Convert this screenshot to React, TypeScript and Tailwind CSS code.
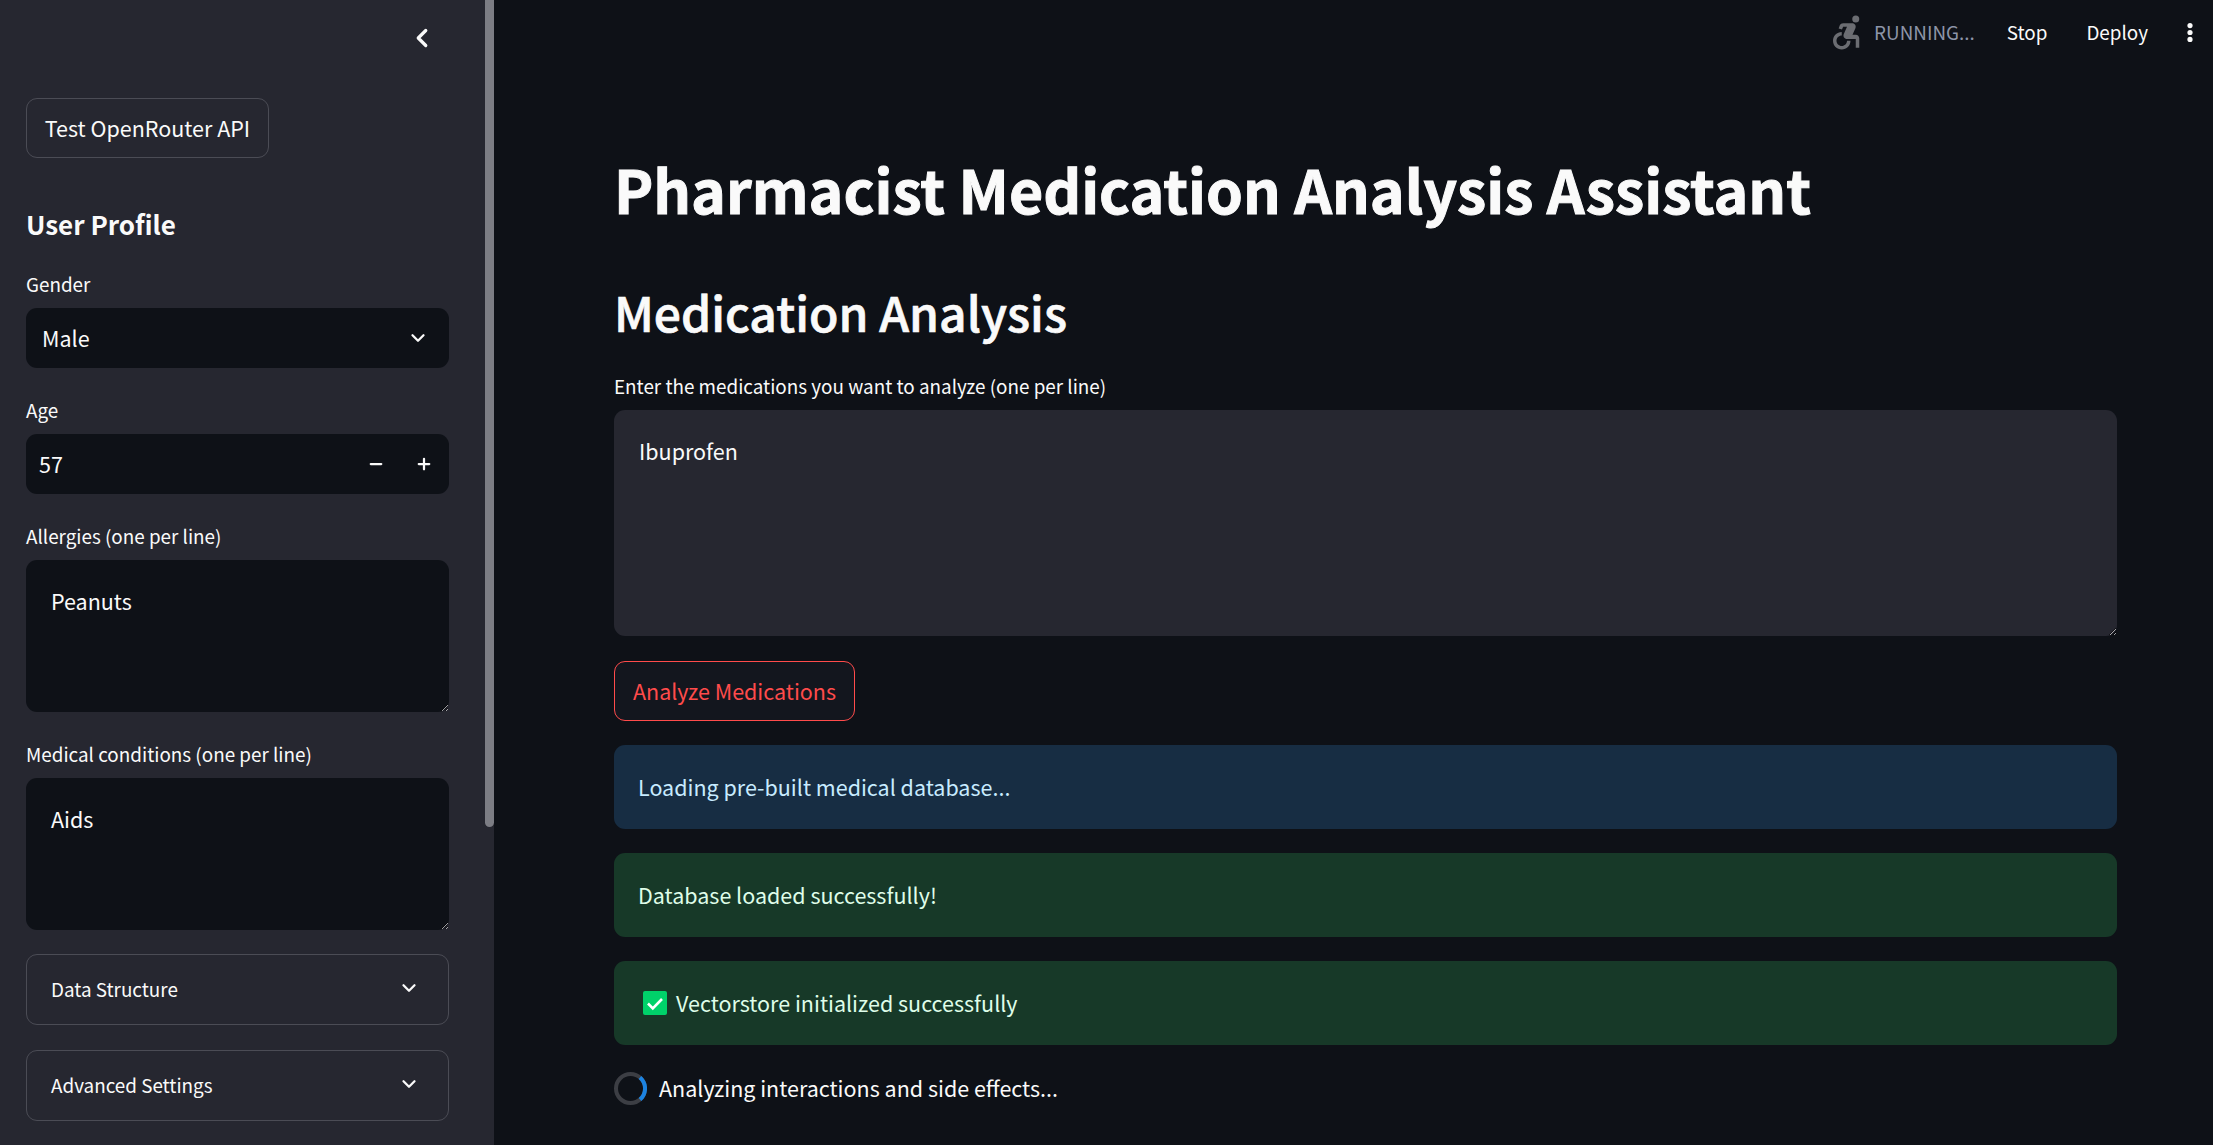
import { MdAccessibleForward } from "react-icons/md";
import { ChevronDown, ChevronLeft, Minus, Plus } from "lucide-react";

const font = { sans: "font-['Noto_Sans_CJK_SC','Liberation_Sans',sans-serif]" };

function Label({ children }: { children: string }) {
  return <div className="h-[24px] text-[18.85px] leading-[24px] text-[#fafafa]">{children}</div>;
}

function Area({ value }: { value: string }) {
  return (
    <textarea
      readOnly
      defaultValue={value}
      className="mt-[12px] block h-[152px] w-full resize-y rounded-[11px] bg-[#0e1117] px-[25px] py-[25px] text-[21.5px] leading-[32px] text-[#fafafa] outline-none"
    />
  );
}

function Expander({ title }: { title: string }) {
  return (
    <div className="flex h-[71px] items-center justify-between rounded-[11px] border border-[#4b4c55] pl-[24px] pr-[28px]">
      <span className="text-[18.85px] text-[#fafafa]">{title}</span>
      <ChevronDown className="size-[22px] -translate-y-[2px] text-[#fafafa]" strokeWidth={2.5} />
    </div>
  );
}

function Sidebar() {
  return (
    <aside className="relative h-full w-[494px] shrink-0 overflow-hidden bg-[#262730] pl-[26px] pr-[45px]">
      <div className="flex h-[98px] justify-end pr-[12px] pt-[23px]">
        <ChevronLeft className="size-[30px] text-[#fafafa]" strokeWidth={2.6} />
      </div>
      <button className="h-[60px] w-[243px] rounded-[11px] border border-[#4b4c55] text-center text-[21.5px] text-[#fafafa]">
        Test OpenRouter API
      </button>
      <h3 className="mt-[46px] text-[26px] leading-[40px] font-bold text-[#fafafa]">User Profile</h3>
      <div className="mt-[28px]">
        <Label>Gender</Label>
        <div className="mt-[12px] flex h-[60px] items-center justify-between rounded-[11px] bg-[#0e1117] pl-[16px] pr-[20px] text-[21.5px] text-[#fafafa]">
          Male
          <ChevronDown className="size-[22px]" strokeWidth={2.5} />
        </div>
      </div>
      <div className="mt-[30px]">
        <Label>Age</Label>
        <div className="mt-[12px] flex h-[60px] items-center rounded-[11px] bg-[#0e1117] pl-[13px] text-[21.5px] text-[#fafafa]">
          <span className="flex-1">57</span>
          <Minus className="mr-[30px] size-[18px]" strokeWidth={3} />
          <Plus className="mr-[16px] size-[18px]" strokeWidth={3} />
        </div>
      </div>
      <div className="mt-[30px]">
        <Label>Allergies (one per line)</Label>
        <Area value="Peanuts" />
      </div>
      <div className="mt-[30px]">
        <Label>Medical conditions (one per line)</Label>
        <Area value="Aids" />
      </div>
      <div className="mt-[24px] flex flex-col gap-[25px]">
        <Expander title="Data Structure" />
        <Expander title="Advanced Settings" />
      </div>
      <div className="absolute top-0 right-0 h-[827px] w-[9px] rounded-b-[5px] bg-[#7c7d84]" />
    </aside>
  );
}

function Alert({ bg, text, children }: { bg: string; text: string; children: React.ReactNode }) {
  return (
    <div className={`flex h-[84px] items-center gap-[10px] rounded-[11px] px-[24px] text-[21.5px] ${bg} ${text}`}>
      {children}
    </div>
  );
}

function Toolbar() {
  return (
    <div className="absolute top-0 right-0 flex h-[64px] items-center text-[18.85px] text-[#fafafa]">
      <MdAccessibleForward className="mr-[6px] size-[42px] text-[#6b6d72]" />
      <span className="mr-[32px] text-[#8d95a8]">RUNNING...</span>
      <span className="mr-[39px]">Stop</span>
      <span className="mr-[39px]">Deploy</span>
      <svg viewBox="0 0 6 19" className="mr-[20px] h-[19px] w-[6px] fill-[#fafafa]" aria-hidden>
        <circle cx="3" cy="2.6" r="2.6" />
        <circle cx="3" cy="9.5" r="2.6" />
        <circle cx="3" cy="16.4" r="2.6" />
      </svg>
    </div>
  );
}

export default function App() {
  return (
    <div className={`flex h-screen w-full overflow-hidden bg-[#0e1117] ${font.sans}`}>
      <Sidebar />
      <main className="relative min-w-0 flex-1 pl-[120px] pr-[96px]">
        <Toolbar />
        <h1 className="mt-[151px] text-[59px] leading-[76px] font-bold text-[#fafafa] [-webkit-text-stroke:1px_#fafafa]">
          Pharmacist Medication Analysis Assistant
        </h1>
        <h2 className="mt-[51px] text-[48px] leading-[66px] font-medium text-[#fafafa] [-webkit-text-stroke:0.7px_#fafafa]">
          Medication Analysis
        </h2>
        <div className="mt-[30px] h-[24px] text-[18.85px] leading-[24px] text-[#fafafa]">
          Enter the medications you want to analyze (one per line)
        </div>
        <textarea
          readOnly
          defaultValue="Ibuprofen"
          className="mt-[12px] block h-[226px] w-full resize-y rounded-[11px] bg-[#262730] px-[25px] py-[25px] text-[21.5px] leading-[32px] text-[#fafafa] outline-none"
        />
        <button className="mt-[25px] block h-[60px] w-[241px] rounded-[11px] border border-[#ff4b4b] bg-[#13161e] text-center text-[21.5px] text-[#ff4b4b]">
          Analyze Medications
        </button>
        <div className="mt-[24px] flex flex-col gap-[24px]">
          <Alert bg="bg-[#172d43]" text="text-[#c7ebff]">Loading pre-built medical database...</Alert>
          <Alert bg="bg-[#173928]" text="text-[#dffde9]">Database loaded successfully!</Alert>
          <Alert bg="bg-[#173928]" text="text-[#dffde9]">
            <svg viewBox="0 0 24 24" className="ml-[5px] size-[24px] shrink-0" aria-hidden>
              <rect width="24" height="24" rx="2" fill="#00d26a" />
              <path d="M5 12.5l4.8 4.8L19 8" fill="none" stroke="#fff" strokeWidth="2.6" />
            </svg>
            <span className="-ml-[1px]">Vectorstore initialized successfully</span>
          </Alert>
        </div>
        <div className="mt-[27px] flex items-center gap-[12px] text-[21.5px] text-[#fafafa]">
          <svg viewBox="0 0 33 33" className="size-[33px] shrink-0" fill="none" strokeWidth="4" aria-hidden>
            <circle cx="16.5" cy="16.5" r="14.5" stroke="#3c3e44" />
            <path d="M26 5.5A14.5 14.5 0 0 1 26 27.5" stroke="#1c83e1" />
          </svg>
          Analyzing interactions and side effects...
        </div>
      </main>
    </div>
  );
}
